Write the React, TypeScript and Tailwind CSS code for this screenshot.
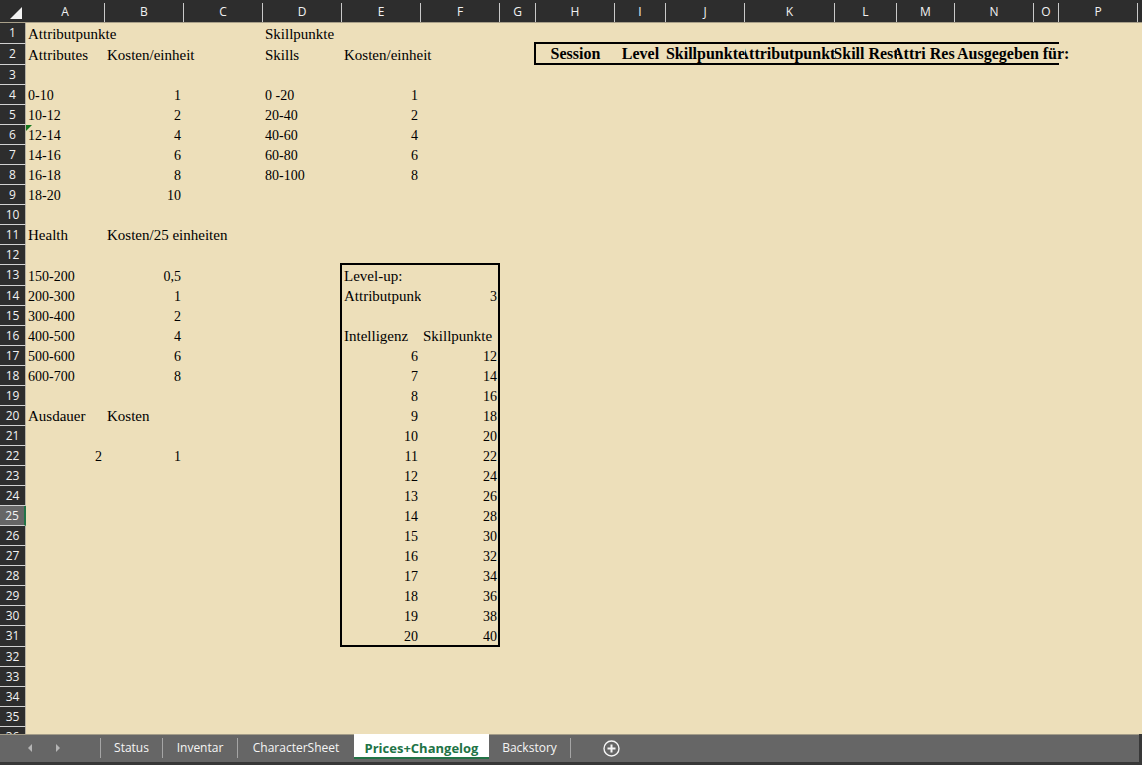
import { useState } from "react";
import clsx from "clsx";

const columns = [
  { name: "A", width: "w-[79px]" },
  { name: "B", width: "w-[79px]" },
  { name: "C", width: "w-[79px]" },
  { name: "D", width: "w-[79px]" },
  { name: "E", width: "w-[79px]" },
  { name: "F", width: "w-[79px]" },
  { name: "G", width: "w-[36px]" },
  { name: "H", width: "w-[79px]" },
  { name: "I", width: "w-[51px]" },
  { name: "J", width: "w-[79px]" },
  { name: "K", width: "w-[90px]" },
  { name: "L", width: "w-[62px]" },
  { name: "M", width: "w-[58px]" },
  { name: "N", width: "w-[79px]" },
  { name: "O", width: "w-[25px]" },
  { name: "P", width: "w-[79px]" },
];

const cells: Record<string, string | number> = {
  A1: "Attributpunkte", D1: "Skillpunkte",
  A2: "Attributes", B2: "Kosten/einheit", D2: "Skills", E2: "Kosten/einheit",
  H2: "Session", I2: "Level", J2: "Skillpunkte", K2: "Attributpunkte",
  L2: "Skill Rest", M2: "Attri Rest", N2: "Ausgegeben für:",
  A4: "0-10", B4: 1, D4: "0 -20", E4: 1,
  A5: "10-12", B5: 2, D5: "20-40", E5: 2,
  A6: "12-14", B6: 4, D6: "40-60", E6: 4,
  A7: "14-16", B7: 6, D7: "60-80", E7: 6,
  A8: "16-18", B8: 8, D8: "80-100", E8: 8,
  A9: "18-20", B9: 10,
  A11: "Health", B11: "Kosten/25 einheiten",
  A13: "150-200", B13: 0.5, E13: "Level-up:",
  A14: "200-300", B14: 1, E14: "Attributpunkte", F14: 3,
  A15: "300-400", B15: 2,
  A16: "400-500", B16: 4, E16: "Intelligenz", F16: "Skillpunkte",
  A17: "500-600", B17: 6,
  A18: "600-700", B18: 8,
  A20: "Ausdauer", B20: "Kosten",
  A22: 2, B22: 1,
};
for (let level = 6; level <= 20; level++) {
  cells[`E${level + 11}`] = level;
  cells[`F${level + 11}`] = level * 2;
}

const rows = Array.from({ length: 36 }, (_, i) => i + 1);
const tallRows = [1, 2, 13, 31];
const selectedRow = 25;
const clipped = ["E14", "J2", "K2", "L2", "M2"];

function Cell({ column, row }: { column: string; row: number }) {
  const value = cells[column + row];
  const numeric = typeof value === "number";
  const heading = row === 2 && column >= "H";
  const inLevelRows = row >= 13 && row <= 31;
  const right =
    (inLevelRows && (column === "D" || column === "F")) || (row === 2 && column === "G");
  const bottom =
    ((row === 12 || row === 31) && (column === "E" || column === "F")) ||
    ((row === 1 || row === 2) && column >= "H" && column <= "O");
  const corner = column + row === "D13" || column + row === "G2";
  return (
    <td
      className={clsx(
        "relative border-black p-0 align-middle whitespace-nowrap",
        right && "border-r-2",
        bottom && "border-b-2",
      )}
    >
      {value !== undefined && (
        <div
          className={clsx(
            "flex",
            heading
              ? "h-[18px] text-base leading-[18px] font-bold"
              : /^\d/.test(String(value))
                ? "h-[18px] text-sm leading-5"
                : "h-[18px] text-[15px] leading-[18px]",
            heading && column !== "N" ? "justify-center" : numeric ? "justify-end" : "pl-0.5",
            numeric && (right ? "pr-px" : "pr-[3px]"),
            clipped.includes(column + row) && "overflow-hidden",
          )}
        >
          <span>{numeric ? String(value).replace(".", ",") : value}</span>
        </div>
      )}
      {corner && <span className="absolute -top-0.5 -right-0.5 size-0.5 bg-black" />}
      {column === "A" && row === 6 && (
        <svg className="absolute top-0 left-0 size-1.5" viewBox="0 0 6 6" aria-hidden="true">
          <path d="M0 0H6L0 6Z" fill="#16761d" />
        </svg>
      )}
    </td>
  );
}

const tabs = [
  { name: "Status", width: "w-[62px]" },
  { name: "Inventar", width: "w-[75px]" },
  { name: "CharacterSheet", width: "w-[116px]" },
  { name: "Prices+Changelog", width: "w-[135px]" },
  { name: "Backstory", width: "w-[82px]" },
];

export default function App() {
  const [active, setActive] = useState("Prices+Changelog");
  return (
    <div className="flex h-screen flex-col overflow-hidden bg-[#383838] font-['Open_Sans','Noto_Sans',sans-serif]">
      <main className="min-h-0 flex-1 overflow-hidden bg-[#eddfba]">
        <table className="w-full table-fixed border-separate border-spacing-0">
          <colgroup>
            <col className="w-[26px]" />
            {columns.map((c) => (
              <col key={c.name} className={c.width} />
            ))}
            <col />
          </colgroup>
          <thead>
            <tr className="h-[23px] bg-[#2d2d2d] text-[12px] text-[#f2f2f2]">
              <td className="border-b border-[#a9a08a] p-0">
                <svg className="ml-2.5 mt-1 size-3" viewBox="0 0 12 12" aria-hidden="true">
                  <path d="M12 0V12H0Z" fill="#f3f3f3" />
                </svg>
              </td>
              {columns.map((c) => (
                <th key={c.name} scope="col" className="border-b border-[#a9a08a] p-0 align-bottom font-normal">
                  <div className="h-[19px] border-r border-[#c9c9c9] leading-[18px]">{c.name}</div>
                </th>
              ))}
              <td className="border-b border-[#a9a08a] p-0" />
            </tr>
          </thead>
          <tbody className="font-['Liberation_Serif',serif] text-black">
            {rows.map((row) => (
              <tr key={row} className={tallRows.includes(row) ? "h-[21px]" : "h-5"}>
                <th
                  scope="row"
                  className={clsx(
                    "border-b border-b-[#d0d0d0] p-0 text-center font-['Open_Sans','Noto_Sans',sans-serif] text-[12px] leading-[18px] font-normal text-[#f2f2f2]",
                    row === selectedRow
                      ? "border-r-2 border-r-[#217346] bg-[#666666]"
                      : "border-r border-r-[#b5b0a2] bg-[#2d2d2d]",
                  )}
                >
                  {row}
                </th>
                {columns.map((c) => (
                  <Cell key={c.name} column={c.name} row={row} />
                ))}
                <td className="p-0" />
              </tr>
            ))}
          </tbody>
        </table>
      </main>
      <footer className="mr-[3px] mb-[3px] flex h-7 shrink-0 border-t border-[#a39c88] bg-[#666666] text-[12px] text-[#f5f5f5]">
        <div className="flex w-[100px] shrink-0 items-start pt-[7px] pl-[24px]">
          <button aria-label="Previous sheet" className="flex h-3 w-3 items-center justify-center">
            <svg className="h-2 w-1" viewBox="0 0 4 8"><path d="M4 0V8L0 4Z" fill="#b5b5b5" /></svg>
          </button>
          <button aria-label="Next sheet" className="ml-4 flex h-3 w-3 items-center justify-center">
            <svg className="h-2 w-1" viewBox="0 0 4 8"><path d="M0 0V8L4 4Z" fill="#b5b5b5" /></svg>
          </button>
        </div>
        <nav className="flex items-start" aria-label="Sheets">
          <span className="mt-[3px] h-5 w-px bg-[#a5a5a5]" />
          {tabs.map((t) => (
            <button
              key={t.name}
              onClick={() => setActive(t.name)}
              className={clsx(
                "flex shrink-0 justify-center whitespace-nowrap",
                t.width,
                t.name === active
                  ? "-mt-px h-[25px] border-b-2 border-[#217346] bg-white pt-1 text-[13px] leading-5 font-bold text-[#217346]"
                  : "mt-[3px] h-5 leading-5",
                t.name !== active && t.name !== "CharacterSheet" && "border-r border-[#a5a5a5]",
              )}
            >
              {t.name}
            </button>
          ))}
          <button aria-label="New sheet" className="mt-[5px] ml-8">
            <svg className="size-[17px]" viewBox="0 0 17 17" fill="none" stroke="#f5f5f5">
              <circle cx="8.5" cy="8.5" r="7.5" strokeWidth="1.4" />
              <path d="M8.5 4.5V12.5M4.5 8.5H12.5" strokeWidth="2" />
            </svg>
          </button>
        </nav>
      </footer>
    </div>
  );
}
